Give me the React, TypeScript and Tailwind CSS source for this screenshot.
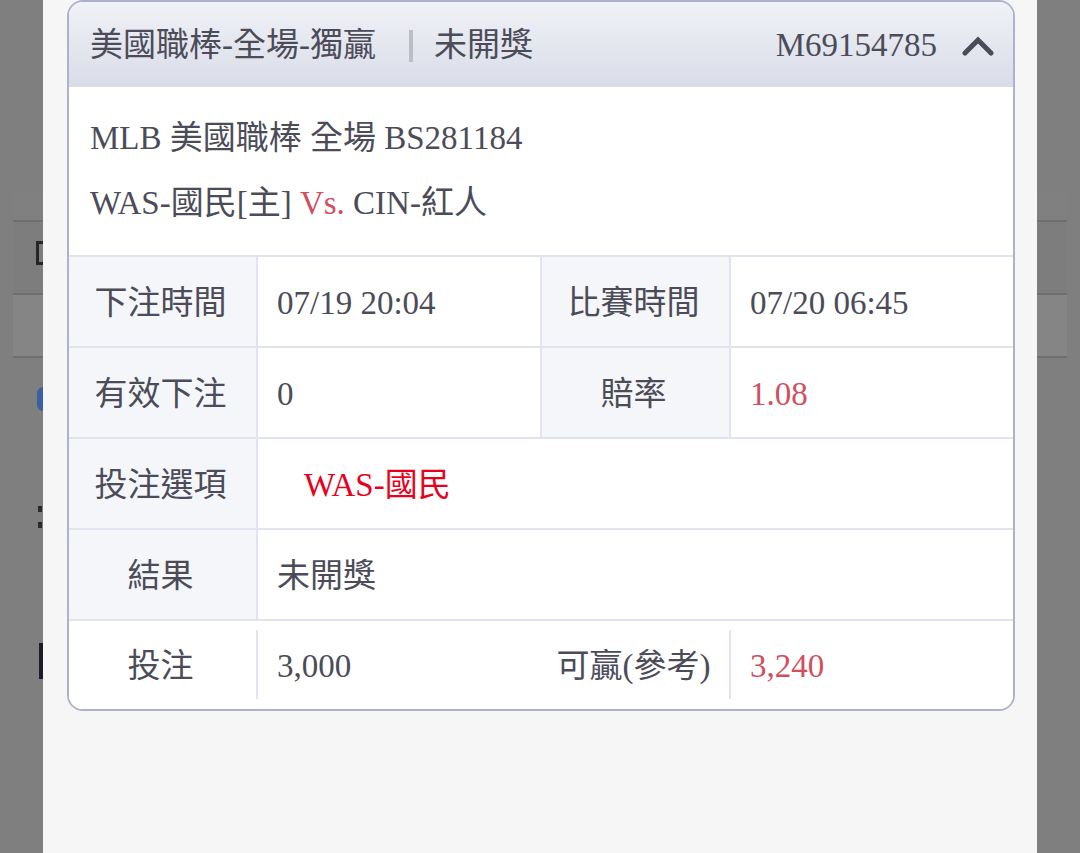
import React from "react";

const FONT = { fontFamily: '"Liberation Serif", "Noto Sans CJK TC", serif' };

function Label({ children, white }: { children: React.ReactNode; white?: boolean }) {
  return (
    <div
      className={`w-[187px] shrink-0 flex items-center justify-center pr-[4px] pt-[4px] ${
        white ? "bg-white" : "bg-[#f5f6fa]"
      }`}
    >
      {children}
    </div>
  );
}

function Value({ children, className = "" }: { children: React.ReactNode; className?: string }) {
  return <div className={`flex-1 flex items-center pl-[19px] pt-[4px] bg-white ${className}`}>{children}</div>;
}

function Sep() {
  return <div className="w-[2px] shrink-0 bg-[#e1e3ef]" />;
}

export default function App() {
  return (
    <div
      className="w-[1080px] h-[853px] flex overflow-hidden bg-[#7f7f7f] text-[#4b4c58] text-[33px]"
      style={FONT}
    >
      {/* left dimmed page strip */}
      <div className="w-[43px] shrink-0 flex flex-col">
        <div className="h-[193px]" />
        <div className="h-[27px] ml-[13px] bg-[#808080]" />
        <div className="h-[2px] ml-[13px] bg-[#6f6f6f]" />
        <div className="h-[71px] ml-[13px] bg-[#7d7d7d] flex flex-col">
          <div className="h-[19px]" />
          <div className="ml-[23px] w-[7px] h-[24px] border-l-[3px] border-t-[3px] border-b-[3px] border-[#262626]" />
        </div>
        <div className="h-[2px] ml-[13px] bg-[#6f6f6f]" />
        <div className="h-[61px] ml-[13px] bg-[#858585]" />
        <div className="h-[2px] ml-[13px] bg-[#707070]" />
        <div className="h-[29px]" />
        <div className="ml-[37px] w-[6px] h-[24px] rounded-l-full bg-[#3c5ea3]" />
        <div className="h-[95px]" />
        <div className="ml-[38px] w-[4px] h-[6px] bg-[#2a2a2a]" />
        <div className="h-[10px]" />
        <div className="ml-[38px] w-[4px] h-[6px] bg-[#2a2a2a]" />
        <div className="h-[115px]" />
        <div className="ml-[39px] w-[4px] h-[36px] bg-[#1b1b2a]" />
      </div>

      {/* modal panel */}
      <div className="w-[994px] shrink-0 bg-[#f6f6f7] pl-[24px] pr-[22px]">
        <div className="border-2 border-[#adb1ca] rounded-[16px] overflow-hidden bg-white">
          {/* header */}
          <div className="h-[85px] flex items-center pl-[21px] pr-[19px] pt-[2px] bg-gradient-to-b from-[#f1f2f7] to-[#d9dce8]">
            <span className="leading-none">美國職棒-全場-獨贏</span>
            <div className="ml-[33px] mr-[21px] w-[4px] h-[32px] bg-[#bcbdc6]" />
            <span className="leading-none">未開獎</span>
            <div className="flex-1" />
            <span className="leading-none">M69154785</span>
            <svg width="32" height="22" viewBox="0 0 32 22" className="ml-[25px]">
              <polyline
                points="3,18 16,5 29,18"
                fill="none"
                stroke="#4b4c58"
                strokeWidth="5"
                strokeLinecap="round"
                strokeLinejoin="miter"
              />
            </svg>
          </div>

          {/* info */}
          <div className="h-[168px] flex flex-col justify-center pl-[21px] leading-[65px]">
            <div>MLB 美國職棒 全場 BS281184</div>
            <div>
              WAS-國民[主] <span className="text-[#d0505f]">Vs.</span> CIN-紅人
            </div>
          </div>

          {/* table */}
          <div className="flex flex-col">
            <div className="h-[91px] flex border-t-2 border-[#e1e3ef]">
              <Label>下注時間</Label>
              <Sep />
              <Value>07/19 20:04</Value>
              <Sep />
              <Label>比賽時間</Label>
              <Sep />
              <Value>07/20 06:45</Value>
            </div>
            <div className="h-[91px] flex border-t-2 border-[#e1e3ef]">
              <Label>有效下注</Label>
              <Sep />
              <Value>0</Value>
              <Sep />
              <Label>賠率</Label>
              <Sep />
              <Value className="text-[#d0505f]">1.08</Value>
            </div>
            <div className="h-[91px] flex border-t-2 border-[#e1e3ef]">
              <Label>投注選項</Label>
              <Sep />
              <Value className="pl-[46px] text-[#e8001c]">WAS-國民</Value>
            </div>
            <div className="h-[91px] flex border-t-2 border-[#e1e3ef]">
              <Label>結果</Label>
              <Sep />
              <Value>未開獎</Value>
            </div>
            <div className="h-[90px] flex border-t-2 border-[#e1e3ef] bg-white">
              <Label white>投注</Label>
              <div className="w-[2px] shrink-0 flex flex-col pt-[9px] pb-[10px]">
                <div className="flex-1 bg-[#e1e3ef]" />
              </div>
              <Value>3,000</Value>
              <div className="w-[2px] shrink-0" />
              <Label white>可贏(參考)</Label>
              <div className="w-[2px] shrink-0 flex flex-col pt-[9px] pb-[10px]">
                <div className="flex-1 bg-[#e1e3ef]" />
              </div>
              <Value className="text-[#d0505f]">3,240</Value>
            </div>
          </div>
        </div>
      </div>

      {/* right dimmed page strip */}
      <div className="flex-1 flex flex-col">
        <div className="h-[193px]" />
        <div className="h-[27px] mr-[13px] bg-[#808080]" />
        <div className="h-[2px] mr-[13px] bg-[#6f6f6f]" />
        <div className="h-[71px] mr-[13px] bg-[#7d7d7d]" />
        <div className="h-[2px] mr-[13px] bg-[#6f6f6f]" />
        <div className="h-[61px] mr-[13px] bg-[#858585]" />
        <div className="h-[2px] mr-[13px] bg-[#707070]" />
      </div>
    </div>
  );
}
